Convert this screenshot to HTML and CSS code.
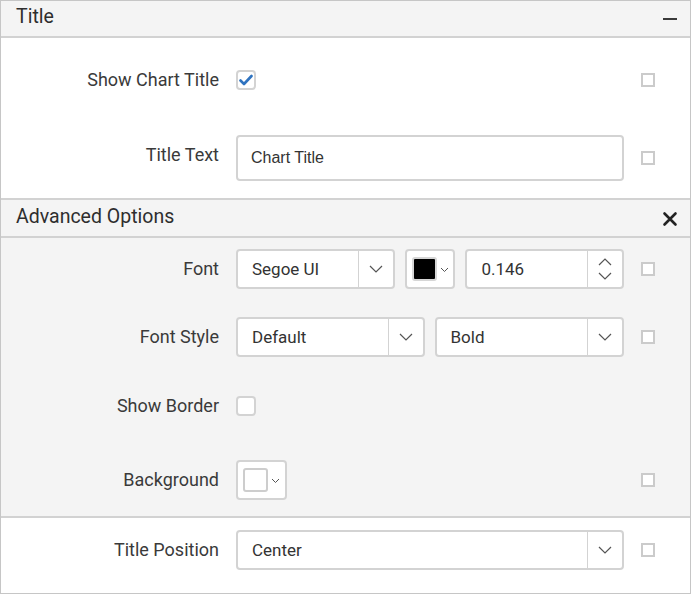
FILE: index.html
```html
<!DOCTYPE html>
<html>
<head>
<meta charset="utf-8">
<link rel="stylesheet" href="styles.css">
</head>
<body>
<div class="panel">
  <div class="hdr">
    <span class="hdr-title">Title</span>
    <svg class="hdr-icon" width="16" height="16" viewBox="0 0 16 16"><rect x="1" y="7" width="14" height="2" fill="#3a3a3a"/></svg>
  </div>
  <div class="sec sec-white sec-top">
    <div class="row r20">
      <div class="lbl">Show Chart Title</div>
      <div class="ctl">
        <span class="chk"><svg width="14" height="12" viewBox="0 0 14 12"><path d="M1.5 6.5 L5 10 L12.5 2" fill="none" stroke="#2f73c0" stroke-width="2.6" stroke-linecap="round" stroke-linejoin="round"/></svg></span>
      </div>
      <span class="sq"></span>
    </div>
    <div class="row r46 mt45">
      <div class="lbl lbl-up">Title Text</div>
      <div class="ctl"><div class="text-input">Chart Title</div></div>
      <span class="sq"></span>
    </div>
  </div>
  <div class="hdr hdr-adv">
    <span class="hdr-title">Advanced Options</span>
    <svg class="hdr-icon" width="16" height="16" viewBox="0 0 16 16"><path d="M2.5 2.5 L13.5 13.5 M13.5 2.5 L2.5 13.5" stroke="#222" stroke-width="2.6" stroke-linecap="round"/></svg>
  </div>
  <div class="sec sec-grey">
    <div class="row r40">
      <div class="lbl">Font</div>
      <div class="ctl ctl-group">
        <div class="dd w159"><span class="dd-val">Segoe UI</span><span class="dd-btn"><svg width="14" height="8" viewBox="0 0 14 8"><path d="M1 1 L7 7 L13 1" fill="none" stroke="#555" stroke-width="1.2"/></svg></span></div>
        <div class="cp"><span class="sw sw-black"></span><svg class="cp-arr" width="9" height="6" viewBox="0 0 9 6"><path d="M1 1 L4.5 4.5 L8 1" fill="none" stroke="#555" stroke-width="1"/></svg></div>
        <div class="num"><span class="dd-val">0.146</span><span class="spin"><svg width="14" height="8" viewBox="0 0 14 8"><path d="M1 7 L7 1 L13 7" fill="none" stroke="#555" stroke-width="1.2"/></svg><svg width="14" height="8" viewBox="0 0 14 8"><path d="M1 1 L7 7 L13 1" fill="none" stroke="#555" stroke-width="1.2"/></svg></span></div>
      </div>
      <span class="sq"></span>
    </div>
    <div class="row r40 mt28">
      <div class="lbl">Font Style</div>
      <div class="ctl ctl-group">
        <div class="dd w189"><span class="dd-val">Default</span><span class="dd-btn"><svg width="14" height="8" viewBox="0 0 14 8"><path d="M1 1 L7 7 L13 1" fill="none" stroke="#555" stroke-width="1.2"/></svg></span></div>
        <div class="dd w190"><span class="dd-val">Bold</span><span class="dd-btn"><svg width="14" height="8" viewBox="0 0 14 8"><path d="M1 1 L7 7 L13 1" fill="none" stroke="#555" stroke-width="1.2"/></svg></span></div>
      </div>
      <span class="sq"></span>
    </div>
    <div class="row r40 mt29">
      <div class="lbl">Show Border</div>
      <div class="ctl"><span class="chk"></span></div>
    </div>
    <div class="row r40 mt34">
      <div class="lbl">Background</div>
      <div class="ctl"><div class="cp"><span class="sw sw-white"></span><svg class="cp-arr" width="9" height="6" viewBox="0 0 9 6"><path d="M1 1 L4.5 4.5 L8 1" fill="none" stroke="#555" stroke-width="1"/></svg></div></div>
      <span class="sq"></span>
    </div>
  </div>
  <div class="sec sec-white sec-bottom">
    <div class="row r40">
      <div class="lbl">Title Position</div>
      <div class="ctl"><div class="dd wfull"><span class="dd-val">Center</span><span class="dd-btn"><svg width="14" height="8" viewBox="0 0 14 8"><path d="M1 1 L7 7 L13 1" fill="none" stroke="#555" stroke-width="1.2"/></svg></span></div></div>
      <span class="sq"></span>
    </div>
  </div>
</div>
</body>
</html>
```

FILE: styles.css
```css
* { box-sizing: border-box; }
html, body { margin: 0; padding: 0; background: #fff; }
body { font-family: Roboto, "Noto Sans", sans-serif; color: #333; }

.panel {
  width: 691px;
  height: 594px;
  border: 1px solid #c6c6c6;
  background: #fff;
  overflow: hidden;
}

.hdr {
  height: 37px;
  background: #f4f4f4;
  border-bottom: 2px solid #d2d2d2;
  display: flex;
  align-items: center;
  justify-content: space-between;
  padding: 0 12px 0 15px;
}
.hdr-adv {
  height: 40px;
  border-top: 2px solid #d2d2d2;
  padding-top: 1px;
}
.hdr-title { font-size: 19.5px; color: #2e2e2e; line-height: 1; margin-top: -4px; }
.hdr-adv .hdr-title { margin-top: -4px; }
.hdr-icon { display: block; }

.sec-white { background: #fff; }
.sec-top { padding-top: 32px; height: 160px; }
.sec-grey { background: #f4f4f4; padding-top: 11px; height: 280px; border-bottom: 2px solid #d2d2d2; }
.sec-bottom { padding-top: 12px; }

.row { display: flex; align-items: center; }
.r20 { height: 20px; }
.r40 { height: 40px; }
.r46 { height: 46px; }
.mt45 { margin-top: 45px; }
.mt28 { margin-top: 28px; }
.mt29 { margin-top: 29px; }
.mt34 { margin-top: 34px; }

.lbl {
  width: 218px;
  text-align: right;
  font-size: 18px;
  color: #3a3a3a;
  line-height: 20px;
}
.lbl-up { margin-top: -6px; }
.ctl { margin-left: 17px; width: 388px; display: flex; align-items: center; }
.ctl-group { gap: 10px; }

.sq {
  margin-left: 17px;
  width: 14px;
  height: 14px;
  border: 2px solid #cbcbcb;
  background: #fff;
}

.chk {
  width: 20px;
  height: 20px;
  border: 2px solid #d3d3d3;
  border-radius: 4px;
  background: #fff;
  display: flex;
  align-items: center;
  justify-content: center;
}

.text-input {
  width: 388px;
  height: 46px;
  border: 2px solid #d3d3d3;
  border-radius: 4px;
  background: #fff;
  font-family: "Liberation Sans", Arial, sans-serif;
  font-size: 16px;
  color: #333;
  display: flex;
  align-items: center;
  padding-left: 13px;
}

.dd, .num {
  height: 40px;
  border: 2px solid #d3d3d3;
  border-radius: 4px;
  background: #fff;
  display: flex;
  align-items: stretch;
}
.w159 { width: 159px; }
.w189 { width: 189px; }
.w190 { width: 190px; }
.wfull { width: 389px; }
.num { width: 159px; }
.dd-val {
  flex: 1;
  display: flex;
  align-items: center;
  padding-left: 14px;
  font-size: 17px;
  color: #333;
}
.dd-btn {
  width: 35px;
  border-left: 1px solid #d3d3d3;
  display: flex;
  align-items: center;
  justify-content: center;
}
.spin {
  width: 35px;
  border-left: 1px solid #d3d3d3;
  display: flex;
  flex-direction: column;
  align-items: center;
  justify-content: center;
  gap: 6px;
}
.spin svg { display: block; }

.cp {
  width: 51px;
  height: 40px;
  border: 2px solid #d3d3d3;
  border-radius: 4px;
  background: #fff;
  display: flex;
  align-items: center;
  padding-left: 5px;
  gap: 3px;
}
.sw {
  width: 25px;
  height: 24px;
  border-radius: 3px;
  border: 2px solid #cfcfcf;
}
.sw-black { background: #000; border-color: #d6d6d6; }
.sw-white { background: #fff; border-color: #cdcdcd; }
.cp-arr { display: block; margin-top: 2px; }
```
